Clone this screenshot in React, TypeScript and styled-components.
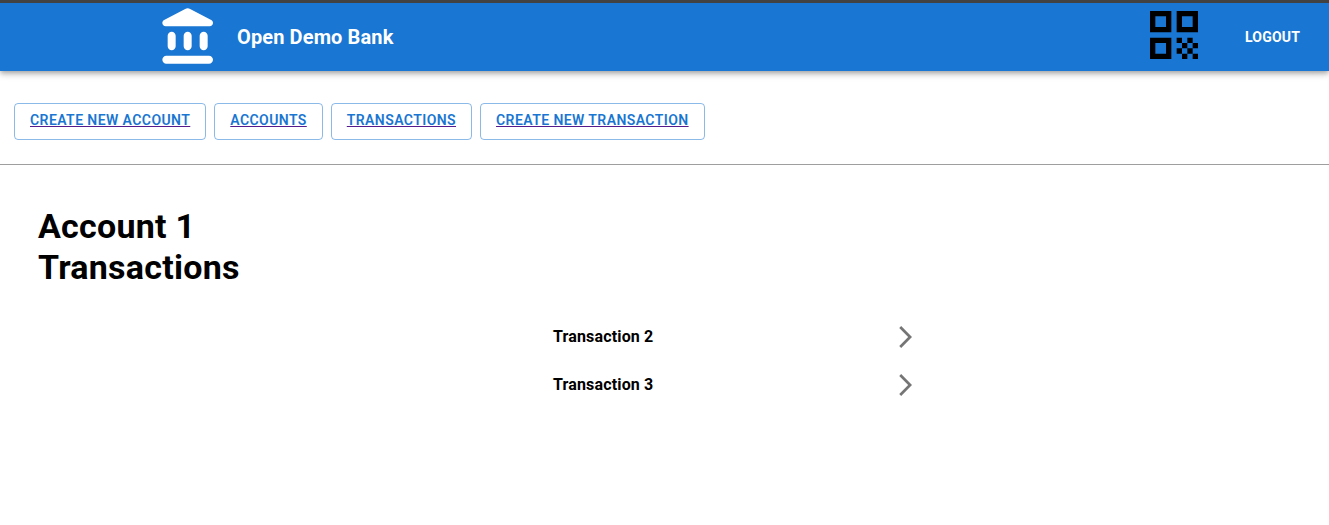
import React from "react";
import styled, { createGlobalStyle } from "styled-components";

const Global = createGlobalStyle`
  html, body { margin: 0; padding: 0; background: #fff; }
  body { font-family: Roboto, "Liberation Sans", sans-serif; color: #000; }
`;

const Page = styled.div`
  display: flex;
  flex-direction: column;
  min-height: 525px;
`;

const Header = styled.header`
  display: flex;
  align-items: center;
  height: 68px;
  border-top: 3px solid #424242;
  padding: 0 13px 0 157px;
  background: #1976d2;
  color: #fff;
  box-shadow: 0 2px 4px -1px rgba(0,0,0,.2), 0 4px 5px 0 rgba(0,0,0,.14), 0 1px 10px 0 rgba(0,0,0,.12);
`;

const Logo = styled.svg`
  width: 64px;
  height: 64px;
  fill: #fff;
  flex: none;
`;

const Brand = styled.h6`
  flex: 1;
  margin: 0 0 0 16px;
  font-size: 20px;
  line-height: 32px;
  font-weight: 700;
  letter-spacing: 0.12px;
`;

const QrIcon = styled.svg`
  width: 64px;
  height: 64px;
  margin: -4px 0 0;
  fill: #000;
  flex: none;
`;

const Logout = styled.button`
  margin-left: 19px;
  padding: 6px 0 6px 20px;
  width: 91px;
  border: 0;
  background: transparent;
  color: #fff;
  text-align: left;
  font: 700 14px/24px Roboto, sans-serif;
  letter-spacing: 0.2px;
  text-transform: uppercase;
`;

const Nav = styled.nav`
  display: flex;
  align-items: flex-start;
  gap: 8px;
  height: 94px;
  padding: 32px 14px 0;
  box-sizing: border-box;
  border-bottom: 1px solid #9e9e9e;
`;

const NavLink = styled.a`
  box-sizing: border-box;
  height: 37px;
  padding: 4px 15px;
  border: 1px solid rgba(25, 118, 210, 0.5);
  border-radius: 4px;
  color: #1976d2;
  font-size: 14px;
  font-weight: 600;
  line-height: 25px;
  letter-spacing: 0.42px;
  text-transform: uppercase;
  text-decoration: underline;
  text-decoration-color: #551a8b;
  cursor: pointer;
`;

const Content = styled.main`
  padding: 41px 38px 0;
`;

const Title = styled.h1`
  margin: 0;
  width: 260px;
  font-size: 34px;
  line-height: 41px;
  font-weight: 700;
  letter-spacing: 0.25px;
`;

const List = styled.ul`
  list-style: none;
  width: 375px;
  margin: 24px 0 0 499px;
  padding: 0;
`;

const Row = styled.li`
  display: flex;
  align-items: center;
  justify-content: space-between;
  height: 48px;
  padding: 0 0 0 16px;
  font-size: 16px;
  font-weight: 700;
  letter-spacing: 0.15px;
`;

const Chevron = styled.svg`
  width: 13px;
  height: 22px;
  margin-top: 1px;
  fill: #757575;
  flex: none;
`;

const accounts = "M4 11.5v4c0 .83.67 1.5 1.5 1.5S7 16.33 7 15.5v-4c0-.83-.67-1.5-1.5-1.5S4 10.67 4 11.5zm6 0v4c0 .83.67 1.5 1.5 1.5s1.5-.67 1.5-1.5v-4c0-.83-.67-1.5-1.5-1.5s-1.5.67-1.5 1.5zM3.5 22h16c.83 0 1.5-.67 1.5-1.5s-.67-1.5-1.5-1.5h-16c-.83 0-1.5.67-1.5 1.5S2.67 22 3.5 22zM16 11.5v4c0 .83.67 1.5 1.5 1.5s1.5-.67 1.5-1.5v-4c0-.83-.67-1.5-1.5-1.5s-1.5.67-1.5 1.5zM10.57 1.49l-7.9 4.16c-.41.21-.67.64-.67 1.1C2 7.44 2.56 8 3.25 8h16.51C20.44 8 21 7.44 21 6.75c0-.46-.26-.89-.67-1.1l-7.9-4.16c-.58-.31-1.28-.31-1.86 0z";
const qr = "M3 11h8V3H3v8zm2-6h4v4H5V5zM3 21h8v-8H3v8zm2-6h4v4H5v-4zm8-12v8h8V3h-8zm6 6h-4V5h4v4zm0 10h2v2h-2zm-6-6h2v2h-2zm2 2h2v2h-2zm-2 2h2v2h-2zm2 2h2v2h-2zm2-2h2v2h-2zm0-4h2v2h-2zm2 2h2v2h-2z";
const chevron = "M6.23 20.23 8 22l10-10L8 2 6.23 3.77 14.46 12z";

const links = ["Create new account", "Accounts", "Transactions", "Create new transaction"];
const rows = ["Transaction 2", "Transaction 3"];

export default function App() {
  return (
    <Page>
      <Global />
      <Header>
        <Logo viewBox="0 0 24 24"><path d={accounts} /></Logo>
        <Brand>Open Demo Bank</Brand>
        <QrIcon viewBox="0 0 24 24"><path d={qr} /></QrIcon>
        <Logout>Logout</Logout>
      </Header>
      <Nav>
        {links.map((l) => <NavLink key={l}>{l}</NavLink>)}
      </Nav>
      <Content>
        <Title>Account 1 Transactions</Title>
        <List>
          {rows.map((r) => (
            <Row key={r}>
              {r}
              <Chevron viewBox="6 2 12 20" preserveAspectRatio="none"><path d={chevron} /></Chevron>
            </Row>
          ))}
        </List>
      </Content>
    </Page>
  );
}
